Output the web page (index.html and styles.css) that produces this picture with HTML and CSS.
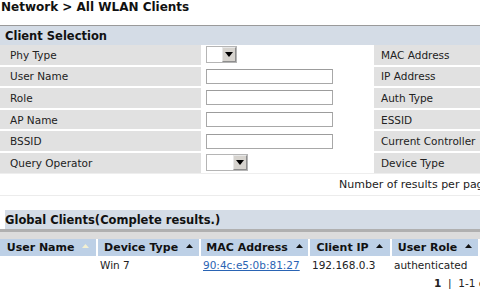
FILE: index.html
```html
<!DOCTYPE html>
<html lang="en">
<head>
    <meta charset="UTF-8">
    <title>Network > All WLAN Clients</title>
    <link rel="stylesheet" href="styles.css">
</head>
<body>
    <div class="page">
        <h1 class="page-title">Network &gt; All WLAN Clients</h1>

        <div class="section-head">Client Selection</div>
        <table class="filter">
            <tr>
                <td class="label">Phy Type</td>
                <td class="field">
                    <span class="select narrow"><span class="select-btn"><svg width="8" height="5" viewBox="0 0 8 5"><polygon points="0,0 8,0 4,5" fill="#000"/></svg></span></span>
                </td>
                <td class="label">MAC Address</td>
                <td class="field"><span class="text-input"></span></td>
            </tr>
            <tr>
                <td class="label">User Name</td>
                <td class="field"><span class="text-input"></span></td>
                <td class="label">IP Address</td>
                <td class="field"><span class="text-input"></span></td>
            </tr>
            <tr>
                <td class="label">Role</td>
                <td class="field"><span class="text-input"></span></td>
                <td class="label">Auth Type</td>
                <td class="field"><span class="text-input"></span></td>
            </tr>
            <tr>
                <td class="label">AP Name</td>
                <td class="field"><span class="text-input"></span></td>
                <td class="label">ESSID</td>
                <td class="field"><span class="text-input"></span></td>
            </tr>
            <tr>
                <td class="label">BSSID</td>
                <td class="field"><span class="text-input"></span></td>
                <td class="label">Current Controller</td>
                <td class="field"><span class="text-input"></span></td>
            </tr>
            <tr>
                <td class="label">Query Operator</td>
                <td class="field">
                    <span class="select wide"><span class="select-btn"><svg width="8" height="5" viewBox="0 0 8 5"><polygon points="0,0 8,0 4,5" fill="#000"/></svg></span></span>
                </td>
                <td class="label">Device Type</td>
                <td class="field"><span class="text-input"></span></td>
            </tr>
        </table>

        <div class="per-page">Number of results per page</div>

        <div class="section-head spaced">Global Clients(Complete results.)</div>
        <div class="toolbar"></div>
        <table class="results">
            <tr>
                <th class="c-user">User Name <svg class="sort active" width="7" height="4" viewBox="0 0 7 4"><polygon points="0,4 7,4 3.5,0"/></svg></th>
                <th class="c-device">Device Type <svg class="sort" width="7" height="4" viewBox="0 0 7 4"><polygon points="0,4 7,4 3.5,0"/></svg></th>
                <th class="c-mac">MAC Address <svg class="sort" width="7" height="4" viewBox="0 0 7 4"><polygon points="0,4 7,4 3.5,0"/></svg></th>
                <th class="c-ip">Client IP <svg class="sort" width="7" height="4" viewBox="0 0 7 4"><polygon points="0,4 7,4 3.5,0"/></svg></th>
                <th class="c-role">User Role <svg class="sort" width="7" height="4" viewBox="0 0 7 4"><polygon points="0,4 7,4 3.5,0"/></svg></th>
                <th class="c-more">Age <svg class="sort" width="7" height="4" viewBox="0 0 7 4"><polygon points="0,4 7,4 3.5,0"/></svg></th>
            </tr>
            <tr>
                <td></td>
                <td>Win 7</td>
                <td><a href="#">90:4c:e5:0b:81:27</a></td>
                <td>192.168.0.3</td>
                <td>authenticated</td>
                <td class="flag">a</td>
            </tr>
        </table>

        <div class="pager"><b>1</b> &nbsp;|&nbsp; 1-1 of 1</div>
    </div>
</body>
</html>
```

FILE: styles.css
```css
html {
    overflow: hidden;
}
body {
    margin: 0;
    font-family: "DejaVu Sans", Verdana, sans-serif;
    font-size: 10.5px;
    color: #222;
    background-color: #fff;
}
.page {
    width: 640px;
}
.page-title {
    font-size: 12px;
    font-weight: bold;
    margin: 0;
    padding: 1px 1px 0;
    line-height: 13px;
    color: #111;
}
.section-head {
    margin-top: 11px;
    border-top: 1px solid #9a9a9a;
    background-color: #d4dce6;
    height: 19px;
    line-height: 20px;
    padding-left: 5px;
    font-size: 11.5px;
    font-weight: bold;
    color: #111;
}
.section-head.spaced {
    margin-top: 0;
    border-top: 1px solid #ececec;
    padding-top: 14px;
    background-clip: content-box;
}

/* filter form */
.filter {
    border-collapse: collapse;
    width: 100%;
}
.filter td {
    height: 19.6px;
    padding: 0;
    border-bottom: 2px solid #fff;
    vertical-align: middle;
}
.filter tr:last-child td {
    border-bottom: 1px solid #eeeeee;
}
.filter .label {
    background-color: #e1e1e1;
    padding-left: 10px;
    color: #222;
}
.filter td:nth-child(1) {
    width: 191px;
}
.filter td:nth-child(2) {
    width: 168px;
    padding-left: 5px;
}
.filter td:nth-child(3) {
    width: 100px;
    padding-left: 7px;
}
.filter td:nth-child(4) {
    padding-left: 5px;
}
.text-input {
    display: block;
    width: 125px;
    height: 13px;
    border: 1px solid #a8a8a8;
    border-top-color: #9c9c9c;
    background-color: #fff;
}
.select {
    display: flex;
    justify-content: flex-end;
    height: 15px;
    border: 1px solid #b5b5b5;
    background-color: #fff;
}
.select.narrow {
    width: 29px;
}
.select.wide {
    width: 40px;
}
.select-btn {
    display: flex;
    align-items: center;
    justify-content: center;
    width: 14px;
    background-color: #d6d3ce;
    border: 1px solid #8e8e8e;
    border-top-color: #e8e8e8;
    border-left-color: #e8e8e8;
    box-sizing: border-box;
}

.per-page {
    padding: 4px 0 0 339px;
    height: 17px;
    line-height: 14px;
    font-size: 11px;
    white-space: nowrap;
}

/* results */
.toolbar {
    height: 2px;
    border-top: 3px solid #b0b0b0;
    background-color: #dcdcdc;
    padding-bottom: 5px;
}
.results {
    border-collapse: separate;
    border-spacing: 0;
}
.results th {
    background-color: #bdd0e6;
    font-weight: bold;
    font-size: 11px;
    height: 17px;
    padding: 0;
    text-align: center;
    border-left: 2px solid #fff;
    color: #111;
    white-space: nowrap;
}
.results th:first-child {
    border-left: none;
}
.results td {
    padding: 2px 2px 0;
    height: 15px;
    border-left: 2px solid #fff;
    white-space: nowrap;
}
.results td:first-child {
    border-left: none;
}
.results a {
    color: #2a64b4;
}
.sort {
    margin-left: 4px;
    vertical-align: 3px;
    fill: #111;
}
.sort.active {
    fill: #f3f0d2;
}
.c-user { width: 96px; }
.c-device { width: 101px; }
.c-mac { width: 107px; }
.c-ip { width: 80px; }
.c-role { width: 86px; }
.c-more { width: 80px; }
.flag {
    color: #c88a30;
}
.pager {
    padding: 4px 0 0 434px;
    white-space: nowrap;
}
```
